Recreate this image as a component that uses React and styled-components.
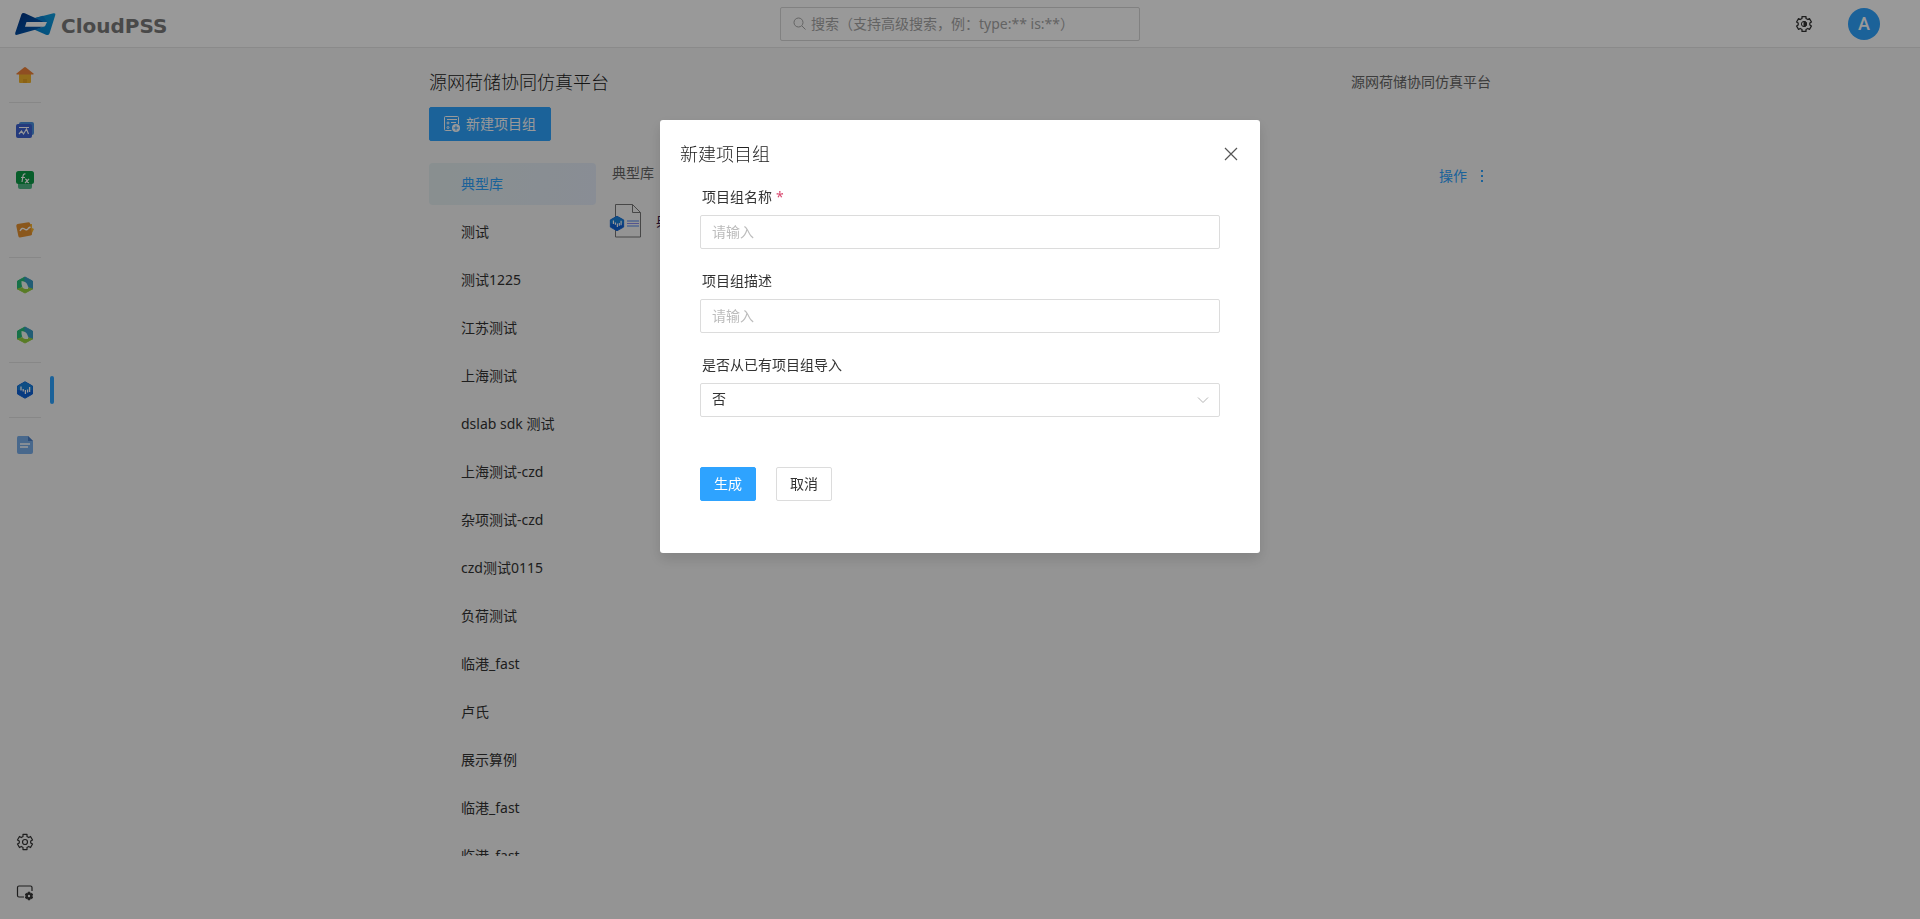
import React, { useState } from 'react';
import styled, { createGlobalStyle, css } from 'styled-components';

const blue = '#2ea3ff';
const textColor = '#333';
const borderColor = '#dcdcdc';

const GlobalStyle = createGlobalStyle`
  * {
    box-sizing: border-box;
  }

  body {
    margin: 0;
    color: ${textColor};
    background: #f7f7f7;
    font-family: 'Noto Sans', 'Noto Sans CJK SC', sans-serif;
    font-size: 14px;
    line-height: 20px;
  }

  button, input, select {
    font: inherit;
  }
`;

const Page = styled.div`
  display: flex;
  flex-direction: column;
  height: 100vh;
  overflow: hidden;
`;

/* ---------- header ---------- */

const Header = styled.header`
  display: grid;
  grid-template-columns: 1fr 360px 1fr;
  align-items: center;
  flex: none;
  height: 48px;
  padding: 0 40px 0 14px;
  background: #fff;
  border-bottom: 1px solid #e6e6e6;
`;

const Brand = styled.a`
  display: flex;
  align-items: center;
  gap: 5px;
  color: #7a7a7a;
  font-family: 'DejaVu Sans', sans-serif;
  font-size: 20px;
  font-weight: 700;
  line-height: 24px;
  text-decoration: none;
`;

const BrandName = styled.span`
  padding-top: 4px;
`;

const SearchBox = styled.label`
  display: flex;
  align-items: center;
  gap: 5px;
  height: 34px;
  margin: 0 -13px 0 13px;
  padding: 0 12px;
  border: 1px solid #d8d8d8;
  border-radius: 2px;
  color: #a6a6a6;
`;

const SearchInput = styled.input`
  flex: 1;
  min-width: 0;
  padding: 0;
  border: 0;
  outline: 0;
  background: none;

  &::placeholder {
    color: #a6a6a6;
    opacity: 1;
  }
`;

const HeaderTools = styled.div`
  display: flex;
  align-items: center;
  justify-content: flex-end;
  gap: 34px;
`;

const IconButton = styled.button`
  display: flex;
  align-items: center;
  justify-content: center;
  width: 20px;
  height: 20px;
  padding: 0;
  border: 0;
  background: none;
  color: ${textColor};
  cursor: pointer;
`;

const Avatar = styled.button`
  width: 32px;
  height: 32px;
  padding: 0;
  border: 0;
  border-radius: 50%;
  background: ${blue};
  color: #fff;
  font-family: Roboto, sans-serif;
  font-size: 18px;
  font-weight: 500;
`;

/* ---------- side bar ---------- */

const Body = styled.div`
  display: flex;
  flex: 1;
  min-height: 0;
`;

const SideBar = styled.nav`
  display: flex;
  flex-direction: column;
  flex: none;
  width: 50px;
  padding: 2px 0;
`;

const SideLink = styled.a`
  position: relative;
  display: flex;
  align-items: center;
  justify-content: center;
  height: 50px;
  color: ${textColor};

  ${({ $active }) => $active && css`
    &::after {
      content: '';
      position: absolute;
      left: 100%;
      width: 4px;
      height: 28px;
      border-radius: 2px;
      background: ${blue};
    }
  `}
`;

const Separator = styled.hr`
  width: 32px;
  height: 1px;
  margin: 2px 9px;
  border: 0;
  background: #e2e2e2;
`;

const Spacer = styled.div`
  flex: 1;
`;

/* ---------- main ---------- */

const MainWrapper = styled.div`
  display: flex;
  flex: 1;
  padding-right: 50px;
`;

const Main = styled.main`
  display: flex;
  flex-direction: column;
  flex: 1;
  max-width: 1062px;
  min-height: 0;
  margin: 0 auto;
  padding: 22px 0 63px;
`;

const TitleRow = styled.div`
  display: flex;
  align-items: center;
  justify-content: space-between;
  height: 24px;
  margin-bottom: 13px;
  color: #666;
`;

const Title = styled.h1`
  margin: 0;
  color: #222;
  font-size: 18px;
  font-weight: 300;
  line-height: 24px;
`;

const Button = styled.button`
  display: inline-flex;
  align-items: center;
  align-self: flex-start;
  flex: none;
  gap: 6px;
  height: 34px;
  padding: 0 13px;
  border: 1px solid ${({ $primary }) => ($primary ? blue : borderColor)};
  border-radius: 2px;
  background: ${({ $primary }) => ($primary ? blue : '#fff')};
  color: ${({ $primary }) => ($primary ? '#fff' : textColor)};
  cursor: pointer;
`;

const CreateButton = styled(Button)`
  padding: 0 14px;
`;

const Columns = styled.div`
  display: flex;
  flex: 1;
  gap: 13px;
  min-height: 0;
  margin-top: 22px;
`;

const GroupList = styled.ul`
  flex: none;
  width: 167px;
  margin: 0;
  padding: 0;
  list-style: none;
  overflow: hidden;
`;

const GroupItem = styled.li`
  margin-bottom: 6px;
`;

const GroupLink = styled.a`
  display: block;
  padding: 11px 32px;
  border-radius: 4px;
  color: ${({ $active }) => ($active ? blue : textColor)};
  background: ${({ $active }) => ($active ? 'linear-gradient(100deg, #e4eff0, #e4ecf8)' : 'none')};
  text-decoration: none;
  white-space: nowrap;
`;

const Detail = styled.section`
  flex: 1;
`;

const DetailHeader = styled.div`
  display: flex;
  justify-content: space-between;
  height: 41px;
  padding-left: 3px;
  color: #666;
`;

const ActionButton = styled.button`
  display: flex;
  align-items: center;
  gap: 13px;
  height: 26px;
  padding: 0 7px 0 0;
  border: 0;
  background: none;
  color: ${blue};
`;

const FileLink = styled.a`
  display: flex;
  align-items: center;
  gap: 14px;
  color: #3b1a4a;
  text-decoration: none;
`;

/* ---------- dialog ---------- */

const Overlay = styled.div`
  position: fixed;
  inset: 0;
  display: flex;
  align-items: flex-start;
  justify-content: center;
  padding-top: 120px;
  background: rgba(0, 0, 0, 0.4);
`;

const Dialog = styled.section`
  width: 600px;
  padding: 20px 20px 52px;
  border-radius: 3px;
  background: #fff;
  box-shadow: 0 6px 14px rgba(0, 0, 0, 0.13);
`;

const DialogHeader = styled.div`
  display: flex;
  align-items: center;
  justify-content: space-between;
  height: 28px;
  margin-right: -1px;
`;

const DialogTitle = styled.h2`
  margin: 0;
  color: #222;
  font-size: 18px;
  font-weight: 300;
  line-height: 24px;
`;

const Form = styled.form`
  padding: 19px 20px 0;
`;

const Field = styled.div`
  height: 84px;
`;

const Label = styled.label`
  display: block;
  height: 28px;
  padding-left: 2px;
`;

const Required = styled.span`
  margin-left: 4px;
  color: #d9486f;
`;

const controlStyle = css`
  display: block;
  width: 100%;
  height: 34px;
  padding: 0 11px 2px;
  border: 1px solid ${borderColor};
  border-radius: 2px;
  background: #fff;
  color: ${textColor};
  outline: 0;
`;

const TextInput = styled.input`
  ${controlStyle}

  &::placeholder {
    color: #bcbcbc;
    opacity: 1;
  }
`;

const SelectWrapper = styled.div`
  display: grid;
  align-items: center;

  select, svg {
    grid-area: 1 / 1;
  }

  svg {
    justify-self: end;
    margin-right: 11px;
    pointer-events: none;
  }
`;

const Select = styled.select`
  ${controlStyle}
  appearance: none;
`;

const Actions = styled.div`
  display: flex;
  gap: 20px;
  margin-top: 28px;
`;

/* ---------- icons ---------- */

// outline of a six-toothed gear round (10, 10)
const gearPoints = (outer, inner) =>
  [0, 1, 2, 3, 4, 5]
    .flatMap(i => [[-20, inner], [-15, outer], [15, outer], [20, inner]]
      .map(([deg, r]) => {
        const a = ((i * 60 - 90 + deg) * Math.PI) / 180;
        return `${(10 + r * Math.cos(a)).toFixed(2)},${(10 + r * Math.sin(a)).toFixed(2)}`;
      }))
    .join(' ');

const Logo = () => (
  <svg width="42" height="24" viewBox="0 0 42 24">
    <defs>
      <linearGradient id="logoLeft" x1="0" y1="0" x2="1" y2="1">
        <stop offset="0" stopColor="#003080" />
        <stop offset="1" stopColor="#0064bd" />
      </linearGradient>
      <linearGradient id="logoRight" x1="0" y1="1" x2="1" y2="0">
        <stop offset="0" stopColor="#0080d0" />
        <stop offset="1" stopColor="#129fdf" />
      </linearGradient>
    </defs>
    <path d="M21 6 39.500 1.200Q42 .8 41.300 3L35.500 21.500Q34.500 23.800 32 22.700L20 17.500 31 14.300 33 10H21Z" fill="url(#logoRight)" />
    <path d="M7.500 2.200Q8.500 .3 10.800 1.300L30 10H12.500L11 14.800H29L22 17.500 3.300 22.800Q.5 23.300 1.200 21Z" fill="url(#logoLeft)" />
    <path d="M21 6 29 3.800 33 10H30Z" fill="#0b82d2" />
  </svg>
);

const SearchIcon = () => (
  <svg width="13" height="13" viewBox="0 0 13 13" fill="none" stroke="currentColor">
    <circle cx="5.500" cy="5.500" r="4.500" />
    <path d="m9 9 3.500 3.500" />
  </svg>
);

const GearIcon = () => (
  <svg width="20" height="20" viewBox="0 0 20 20" fill="none" stroke="currentColor" strokeWidth="1.200" strokeLinejoin="round">
    <polygon points={gearPoints(7.8, 5.8)} />
    <circle cx="10" cy="10" r="2.500" />
  </svg>
);

const ThemeIcon = () => (
  <svg width="20" height="20" viewBox="0 0 20 20" fill="none" stroke="currentColor" strokeWidth="1.300" strokeLinejoin="round">
    <polygon points={gearPoints(7.7, 5.9)} />
    <circle cx="10" cy="10" r="2.600" strokeWidth="1" />
    <path d="M10 7.400a2.600 2.600 0 0 1 0 5.200z" fill="currentColor" strokeWidth="1" />
  </svg>
);

const HomeIcon = () => (
  <svg width="18" height="18" viewBox="0 0 18 18">
    <path d="M3 7h12v9q0 1-1 1h-3v-4H7v4H4q-1 0-1-1z" fill="#f3b52c" />
    <path d="M7 13h4v4H7z" fill="#e8a424" />
    <path d="M8 1.400q1-.8 2 0l7.500 6q.8 1-.5 1.100H1Q-.3 8.400.5 7.400z" fill="#ef8339" />
  </svg>
);

const ChartIcon = () => (
  <svg width="18" height="18" viewBox="0 0 18 18">
    <rect x="3" y="1" width="15" height="13" rx="2" fill="#4a90de" />
    <rect y="3" width="16" height="14" rx="2" fill="#3c62d0" />
    <path d="M3 6.500h10M3 13l2.500-3 2 3 3-5 2 5" fill="none" stroke="#fff" strokeWidth="1.200" />
  </svg>
);

const FunctionIcon = () => (
  <svg width="18" height="18" viewBox="0 0 18 18">
    <rect x="2" y="7" width="14" height="11" rx="2" fill="#4fb886" />
    <rect width="18" height="13" rx="2.500" fill="#0c9c47" />
    <path d="M9.500 3Q7.500 2.500 7 5L6 11M5 6.500h4M9 8q1.500 0 2 2t2 1.500M13 8l-4 4" fill="none" stroke="#fff" strokeWidth="1.200" />
  </svg>
);

const TrendIcon = () => (
  <svg width="18" height="18" viewBox="0 0 18 18">
    <path d="M5 3h11v4l2 1-3 6H5z" fill="#fbb62f" />
    <path d="m1.500 3 11-1.800q1.200 0 1.600 1.300L16 13q0 1.300-1.300 1.500L4 16.500q-1.300 0-1.600-1.300L.3 5Q.2 3.400 1.500 3z" fill="#e6922f" />
    <path d="M4 10q2-4 4.500-2t4-1l2-1" fill="none" stroke="#fff" strokeWidth="1.400" />
  </svg>
);

const LeafIcon = () => (
  <svg width="18" height="18" viewBox="0 0 18 18" strokeLinejoin="round">
    <path d="M9 1 1.500 5v8L9 9z" fill="#27bd78" stroke="#27bd78" />
    <path d="m9 1 7.500 4v8L9 9z" fill="#3a9cc4" stroke="#3a9cc4" />
    <path d="m1.500 13 7.500 4 7.500-4L9 11z" fill="#95cf3f" stroke="#95cf3f" />
    <path d="M5.500 5q5 .5 6 4 1 2 .5 4H9Q5 12 5.500 5z" fill="#eef7f0" />
  </svg>
);

const HexShape = () => (
  <>
    <path d="m9 .8 7.500 4.200v8L9 17.200 1.500 13V5z" fill="#0e62d6" stroke="#0e62d6" strokeLinejoin="round" />
    <path d="m9 .8 7.500 4.200v4H1.500V5z" fill="#1a82dc" />
    <path d="M5 5.500v4M7.200 8v2.500M9.400 9v4M11.600 8.500v3M13.600 6v5" fill="none" stroke="#fff" strokeWidth="1.300" />
  </>
);

const HexIcon = () => (
  <svg width="18" height="18" viewBox="0 0 18 18"><HexShape /></svg>
);

const DocIcon = () => (
  <svg width="18" height="18" viewBox="0 0 18 18">
    <path d="M2.500 0H12l5 5v11q0 2-2 2H3q-2 0-2-2V2Q1 0 2.500 0z" fill="#78ade9" />
    <path d="M12 0v5h5z" fill="#4a7fc8" />
    <path d="M4 8h10M4 11h8" stroke="#fff" strokeWidth="1.600" />
  </svg>
);

const ScreenIcon = () => (
  <svg width="18" height="18" viewBox="0 0 18 18" fill="none" stroke="currentColor" strokeLinejoin="round">
    <path d="M8 14H3q-1.500 0-1.500-1.500v-8Q1.500 3 3 3h11.500Q16 3 16 4.500V8" strokeWidth="1.200" />
    <g transform="translate(7 7) scale(.6)">
      <polygon points={gearPoints(6.5, 4.8)} fill="currentColor" strokeWidth="1.500" />
      <circle cx="10" cy="10" r="2" fill="#f7f7f7" stroke="none" />
    </g>
  </svg>
);

const FormIcon = () => (
  <svg width="16" height="16" viewBox="0 0 16 16" fill="none" stroke="currentColor">
    <path d="M7.500 14.500h-6q-1 0-1-1v-12q0-1 1-1h12q1 0 1 1V8M3 3.500h10M7 6.500h5" />
    <circle cx="4" cy="7" r="1" />
    <circle cx="4" cy="11.500" r="1" />
    <circle cx="12" cy="12" r="4" fill="currentColor" stroke="none" />
    <path d="M12 9.500v5M9.500 12h5" stroke={blue} />
  </svg>
);

const FileIcon = () => (
  <svg width="33" height="34" viewBox="0 0 33 34">
    <path d="M6.500 .5h17l8 8v24.500h-25z" fill="#f7f7f7" stroke="#777" />
    <path d="M23.500 .5v8h8" fill="none" stroke="#777" />
    <path d="M18 17h12M18 22h12" stroke="#4f86ee" />
    <path d="M18 19.500h12" stroke="#8a8cf0" />
    <svg y="11" width="16" height="17" viewBox="0 0 18 18"><HexShape /></svg>
  </svg>
);

const MoreIcon = () => (
  <svg width="4" height="14" viewBox="0 0 4 14" fill="currentColor">
    <rect x="1" y="1" width="2" height="2" />
    <rect x="1" y="6" width="2" height="2" />
    <rect x="1" y="11" width="2" height="2" />
  </svg>
);

const CloseIcon = () => (
  <svg width="14" height="14" viewBox="0 0 14 14" stroke="#555" strokeWidth="1.200">
    <path d="m1 1 12 12M13 1 1 13" />
  </svg>
);

const ChevronIcon = () => (
  <svg width="12" height="12" viewBox="0 0 12 12" fill="none" stroke="#b4b4b4">
    <path d="m1 3.500 5 5 5-5" />
  </svg>
);

/* ---------- data ---------- */

const sideGroups = [
  [{ name: 'home', Icon: HomeIcon }],
  [
    { name: 'chart', Icon: ChartIcon },
    { name: 'function', Icon: FunctionIcon },
    { name: 'trend', Icon: TrendIcon },
  ],
  [
    { name: 'energy', Icon: LeafIcon },
    { name: 'energy-plan', Icon: LeafIcon },
  ],
  [{ name: 'platform', Icon: HexIcon, active: true }],
  [{ name: 'docs', Icon: DocIcon }],
];

const groups = [
  '典型库',
  '测试',
  '测试1225',
  '江苏测试',
  '上海测试',
  'dslab sdk 测试',
  '上海测试-czd',
  '杂项测试-czd',
  'czd测试0115',
  '负荷测试',
  '临港_fast',
  '卢氏',
  '展示算例',
  '临港_fast',
  '临港_fast',
];

function CreateDialog() {
  const [name, setName] = useState('');
  const [description, setDescription] = useState('');

  return (
    <Overlay>
      <Dialog role="dialog" aria-labelledby="dialog-title">
        <DialogHeader>
          <DialogTitle id="dialog-title">新建项目组</DialogTitle>
          <IconButton type="button" aria-label="关闭"><CloseIcon /></IconButton>
        </DialogHeader>
        <Form onSubmit={e => e.preventDefault()}>
          <Field>
            <Label htmlFor="name">项目组名称<Required>*</Required></Label>
            <TextInput id="name" placeholder="请输入" value={name} onChange={e => setName(e.target.value)} />
          </Field>
          <Field>
            <Label htmlFor="description">项目组描述</Label>
            <TextInput id="description" placeholder="请输入" value={description} onChange={e => setDescription(e.target.value)} />
          </Field>
          <Field>
            <Label htmlFor="import">是否从已有项目组导入</Label>
            <SelectWrapper>
              <Select id="import">
                <option>否</option>
              </Select>
              <ChevronIcon />
            </SelectWrapper>
          </Field>
          <Actions>
            <Button $primary type="submit">生成</Button>
            <Button type="button">取消</Button>
          </Actions>
        </Form>
      </Dialog>
    </Overlay>
  );
}

function App() {
  return (
    <Page>
      <GlobalStyle />
      <Header>
        <Brand href="#"><Logo /><BrandName>CloudPSS</BrandName></Brand>
        <SearchBox>
          <SearchIcon />
          <SearchInput aria-label="搜索" placeholder="搜索（支持高级搜索，例：type:** is:**）" />
        </SearchBox>
        <HeaderTools>
          <IconButton type="button" aria-label="设置"><ThemeIcon /></IconButton>
          <Avatar type="button">A</Avatar>
        </HeaderTools>
      </Header>
      <Body>
        <SideBar>
          {sideGroups.map((items, i) => (
            <React.Fragment key={items[0].name}>
              {i > 0 && <Separator />}
              {items.map(({ name, Icon, active }) => (
                <SideLink key={name} href="#" aria-label={name} $active={active}><Icon /></SideLink>
              ))}
            </React.Fragment>
          ))}
          <Spacer />
          <SideLink href="#" aria-label="settings"><GearIcon /></SideLink>
          <SideLink href="#" aria-label="screen"><ScreenIcon /></SideLink>
        </SideBar>
        <MainWrapper>
          <Main>
            <TitleRow>
              <Title>源网荷储协同仿真平台</Title>
              <span>源网荷储协同仿真平台</span>
            </TitleRow>
            <CreateButton $primary type="button"><FormIcon />新建项目组</CreateButton>
            <Columns>
              <GroupList>
                {groups.map((group, i) => (
                  <GroupItem key={i}>
                    <GroupLink href="#" $active={i === 0}>{group}</GroupLink>
                  </GroupItem>
                ))}
              </GroupList>
              <Detail>
                <DetailHeader>
                  <span>典型库</span>
                  <ActionButton type="button">操作<MoreIcon /></ActionButton>
                </DetailHeader>
                <FileLink href="#"><FileIcon />典型库</FileLink>
              </Detail>
            </Columns>
          </Main>
        </MainWrapper>
      </Body>
      <CreateDialog />
    </Page>
  );
}

export default App;
